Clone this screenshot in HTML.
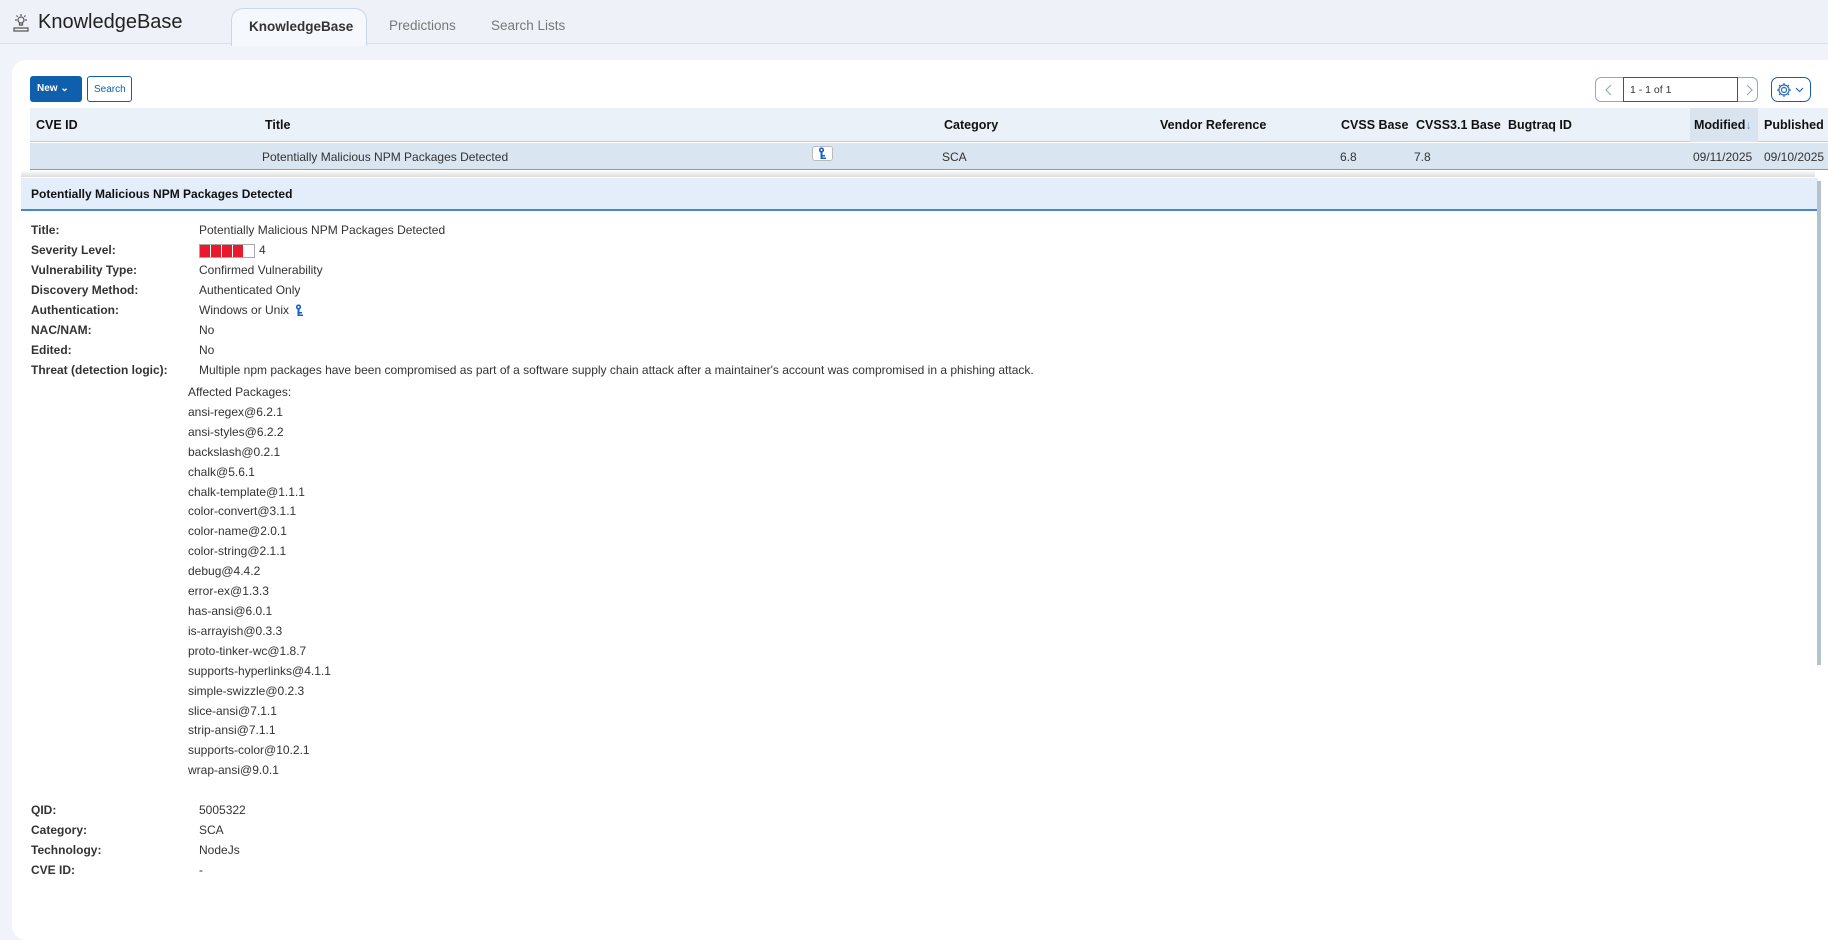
<!DOCTYPE html>
<html><head><meta charset="utf-8"><style>
*{box-sizing:border-box;margin:0;padding:0}
body{width:1828px;height:881px;overflow:hidden;background:#f0f4fa;font-family:"Liberation Sans",Arial,sans-serif;color:#222;position:relative}
.a{position:absolute;white-space:nowrap}
.hdr{font-weight:bold;font-size:12.5px;color:#111}
.t{font-size:12px;color:#333}
.l{font-size:12px;font-weight:bold;color:#333}
</style></head><body>
<div class="a" style="left:0;top:0;width:1828px;height:44px;background:#eef2f8;border-bottom:1px solid #d5e0ec"></div>
<svg class="a" style="left:11px;top:13px" width="20" height="20" viewBox="0 0 20 20" fill="none" stroke="#555" stroke-width="1.2"><circle cx="10" cy="7" r="3"/><path d="M10 1v2M4 7h2M14 7h2M5.5 2.5l1.3 1.3M14.5 2.5l-1.3 1.3M8.5 10v2h3v-2"/><path d="M3 15h14v3H3z"/></svg>
<div class="a" style="left:38px;top:11px;font-size:20px;color:#222">KnowledgeBase</div>
<div class="a" style="left:231px;top:8px;width:136px;height:38px;background:#f5f8fc;border:1px solid #c8d8ea;border-bottom:none;border-radius:12px 12px 0 0"></div>
<div class="a" style="left:249px;top:19px;font-size:13.5px;font-weight:bold;color:#333">KnowledgeBase</div>
<div class="a" style="left:389px;top:18px;font-size:13.5px;color:#777">Predictions</div>
<div class="a" style="left:491px;top:18px;font-size:13.5px;color:#777">Search Lists</div>
<div class="a" style="left:12px;top:60px;width:1830px;height:880px;background:#fff;border-radius:14px"></div>
<div class="a" style="left:30px;top:76px;width:52px;height:26px;background:#0f5fad;border-radius:3px;color:#fff;font-size:10px;font-weight:bold;padding:7px 0 0 7px">New &#8964;</div>
<div class="a" style="left:87px;top:76px;width:45px;height:26px;border:1px solid #0f5fad;border-radius:3px;color:#0f5fad;font-size:10px;padding:7px 0 0 6px">Search</div>
<div class="a" style="left:1595px;top:77px;width:163px;height:25px;border:1px solid #88aad0;border-radius:6px"></div>
<div class="a" style="left:1623px;top:77px;width:115px;height:25px;border:1px solid #0f5fad;font-size:10.5px;padding:6px 0 0 6px;color:#333">1 - 1 of 1</div>
<svg class="a" style="left:1603px;top:83px" width="12" height="14" viewBox="0 0 12 14" fill="none" stroke="#9ab" stroke-width="1.2"><path d="M8 2L3 7l5 5"/></svg>
<svg class="a" style="left:1743px;top:83px" width="12" height="14" viewBox="0 0 12 14" fill="none" stroke="#9ab" stroke-width="1.2"><path d="M4 2l5 5-5 5"/></svg>
<div class="a" style="left:1771px;top:77px;width:40px;height:25px;border:1px solid #0f5fad;border-radius:7px"></div>
<svg class="a" style="left:1776px;top:81px" width="32" height="18" viewBox="0 0 32 18" fill="none" stroke="#2a6cb5" stroke-width="1.2"><circle cx="8" cy="9" r="2.5"/><path d="M8 2v2M8 14v2M1 9h2M13 9h2M3 4l1.5 1.5M13 4l-1.5 1.5M3 14l1.5-1.5M13 14l-1.5-1.5"/><circle cx="8" cy="9" r="5"/><path d="M20 7l3.5 3.5L27 7"/></svg>
<div class="a" style="left:30px;top:108px;width:1798px;height:34px;background:#ebf1f8;border-bottom:1px solid #b8cfe6"></div>
<div class="a" style="left:1690px;top:108px;width:68px;height:34px;background:#d9e4ee"></div>
<div class="a hdr" style="left:36px;top:118px">CVE ID</div>
<div class="a hdr" style="left:265px;top:118px">Title</div>
<div class="a hdr" style="left:944px;top:118px">Category</div>
<div class="a hdr" style="left:1160px;top:118px">Vendor Reference</div>
<div class="a hdr" style="left:1341px;top:118px">CVSS Base</div>
<div class="a hdr" style="left:1416px;top:118px">CVSS3.1 Base</div>
<div class="a hdr" style="left:1508px;top:118px">Bugtraq ID</div>
<div class="a hdr" style="left:1694px;top:118px">Modified<span style="color:#6a9bd0;font-weight:normal">&#8595;</span></div>
<div class="a hdr" style="left:1764px;top:118px">Published</div>
<div class="a" style="left:30px;top:143px;width:1798px;height:27px;background:#d9e5f0;border-bottom:1px solid #999"></div>
<div class="a t" style="left:262px;top:150px">Potentially Malicious NPM Packages Detected</div>
<div class="a" style="left:812px;top:146px;width:21px;height:15px;background:#fff;border:1px solid #bbb;border-radius:3px"></div>
<svg class="a" style="left:818px;top:147px" width="9" height="13" viewBox="0 0 9 13" fill="#1a5fc8"><circle cx="3.5" cy="3" r="2.6"/><rect x="2.5" y="4" width="2" height="8"/><rect x="4" y="8" width="3" height="1.5"/><rect x="4" y="10.5" width="4" height="1.5"/><circle cx="3.5" cy="3" r="1" fill="#fff"/></svg>
<div class="a t" style="left:942px;top:150px">SCA</div>
<div class="a t" style="left:1340px;top:150px">6.8</div>
<div class="a t" style="left:1414px;top:150px">7.8</div>
<div class="a t" style="left:1693px;top:150px">09/11/2025</div>
<div class="a t" style="left:1764px;top:150px">09/10/2025</div>
<div class="a" style="left:21px;top:171px;width:1794px;height:6px;background:linear-gradient(#fafafa,#ddd)"></div>
<div class="a" style="left:21px;top:178px;width:1797px;height:33px;background:#e3eefa;border-bottom:2px solid #4a86d0"></div>
<div class="a" style="left:31px;top:187px;font-size:12px;font-weight:bold;color:#111">Potentially Malicious NPM Packages Detected</div>
<div class="a" style="left:1817px;top:181px;width:4px;height:484px;background:#b4c2cc"></div>
<div class="a l" style="left:31px;top:223px">Title:</div><div class="a t" style="left:199px;top:223px">Potentially Malicious NPM Packages Detected</div>
<div class="a l" style="left:31px;top:243px">Severity Level:</div>
<div class="a" style="left:199px;top:244px;width:56px;height:14px;border:1px solid #aaa;background:#fff"></div>
<div class="a" style="left:200px;top:245px;width:43px;height:12px;background:#e8192c"></div>
<div class="a" style="left:210px;top:245px;width:1px;height:12px;background:#fff"></div>
<div class="a" style="left:221px;top:245px;width:1px;height:12px;background:#fff"></div>
<div class="a" style="left:232px;top:245px;width:1px;height:12px;background:#fff"></div>
<div class="a t" style="left:259px;top:243px">4</div>
<div class="a l" style="left:31px;top:263px">Vulnerability Type:</div><div class="a t" style="left:199px;top:263px">Confirmed Vulnerability</div>
<div class="a l" style="left:31px;top:283px">Discovery Method:</div><div class="a t" style="left:199px;top:283px">Authenticated Only</div>
<div class="a l" style="left:31px;top:303px">Authentication:</div><div class="a t" style="left:199px;top:303px">Windows or Unix</div>
<svg class="a" style="left:295px;top:304px" width="9" height="13" viewBox="0 0 9 13" fill="#1a5fc8"><circle cx="3.5" cy="3" r="2.6"/><rect x="2.5" y="4" width="2" height="8"/><rect x="4" y="8" width="3" height="1.5"/><rect x="4" y="10.5" width="4" height="1.5"/><circle cx="3.5" cy="3" r="1" fill="#fff"/></svg>
<div class="a l" style="left:31px;top:323px">NAC/NAM:</div><div class="a t" style="left:199px;top:323px">No</div>
<div class="a l" style="left:31px;top:343px">Edited:</div><div class="a t" style="left:199px;top:343px">No</div>
<div class="a l" style="left:31px;top:363px">Threat (detection logic):</div><div class="a t" style="left:199px;top:363px">Multiple npm packages have been compromised as part of a software supply chain attack after a maintainer's account was compromised in a phishing attack.</div>
<div class="a t" style="left:188px;top:383px;line-height:19.9px">Affected Packages:<br>ansi-regex@6.2.1<br>ansi-styles@6.2.2<br>backslash@0.2.1<br>chalk@5.6.1<br>chalk-template@1.1.1<br>color-convert@3.1.1<br>color-name@2.0.1<br>color-string@2.1.1<br>debug@4.4.2<br>error-ex@1.3.3<br>has-ansi@6.0.1<br>is-arrayish@0.3.3<br>proto-tinker-wc@1.8.7<br>supports-hyperlinks@4.1.1<br>simple-swizzle@0.2.3<br>slice-ansi@7.1.1<br>strip-ansi@7.1.1<br>supports-color@10.2.1<br>wrap-ansi@9.0.1</div>
<div class="a l" style="left:31px;top:803px">QID:</div><div class="a t" style="left:199px;top:803px">5005322</div>
<div class="a l" style="left:31px;top:823px">Category:</div><div class="a t" style="left:199px;top:823px">SCA</div>
<div class="a l" style="left:31px;top:843px">Technology:</div><div class="a t" style="left:199px;top:843px">NodeJs</div>
<div class="a l" style="left:31px;top:863px">CVE ID:</div><div class="a t" style="left:199px;top:863px">-</div>
</body></html>
